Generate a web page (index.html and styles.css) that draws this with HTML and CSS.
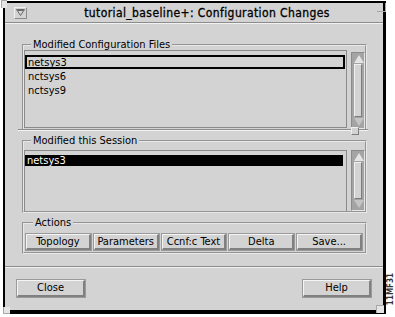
FILE: index.html
```html
<!DOCTYPE html>
<html lang="en">
  <head>
    <meta charset="UTF-8">
    <title>Configuration Changes</title>
    <link rel="stylesheet" href="styles.css">
  </head>
  <body>
    <div class="screen">
      <div class="window">
        <span class="handle handle-tl"></span>
        <span class="handle handle-tr"></span>
        <span class="handle handle-bl"></span>
        <span class="handle handle-br"></span>
        <div class="titlebar">
          <span class="menu-btn">
            <svg width="9" height="7" viewBox="0 0 9 7"><path d="M0.5 0.5 H8.5 L4.5 6.5 Z M1.5 1.5 H7.5" fill="none" stroke="#6a6a6a" stroke-width="1"/></svg>
          </span>
          <span class="title">tutorial_baseline+: Configuration Changes</span>
        </div>
        <div class="content">
          <fieldset class="group files">
            <legend>Modified Configuration Files</legend>
            <div class="listarea">
              <ul class="list list-files">
                <li class="item current">netsys3</li>
                <li class="item">nctsys6</li>
                <li class="item">nctsys9</li>
              </ul>
              <div class="scrollbar sb-files">
                <span class="arrow arrow-up"></span>
                <span class="thumb"></span>
                <span class="arrow arrow-down"></span>
              </div>
            </div>
          </fieldset>
          <div class="sash"><span class="sash-knob"></span></div>
          <fieldset class="group session">
            <legend>Modified this Session</legend>
            <div class="listarea">
              <ul class="list list-session">
                <li class="item selected">netsys3</li>
              </ul>
              <div class="scrollbar sb-session">
                <span class="arrow arrow-up"></span>
                <span class="thumb"></span>
                <span class="arrow arrow-down"></span>
              </div>
            </div>
          </fieldset>
          <fieldset class="group actions">
            <legend>Actions</legend>
            <div class="buttons">
              <button class="btn">Topology</button>
              <button class="btn">Parameters</button>
              <button class="btn">Ccnf:c Text</button>
              <button class="btn">Delta</button>
              <button class="btn">Save...</button>
            </div>
          </fieldset>
        </div>
        <div class="footer">
          <button class="btn btn-wide">Close</button>
          <button class="btn btn-wide">Help</button>
        </div>
      </div>
      <div class="figid">11MF31</div>
    </div>
  </body>
</html>
```

FILE: styles.css
```css
* { box-sizing: border-box; }
body {
  margin: 0;
  background: #fff;
  color: #000;
  font-family: "DejaVu Sans", sans-serif;
  font-stretch: condensed;
  font-size: 11px;
}
.screen {
  position: relative;
  width: 395px;
  height: 317px;
}
.window {
  position: relative;
  display: flex;
  flex-direction: column;
  margin: 1px 0 0 3px;
  width: 383px;
  height: 313px;
  border-style: solid;
  border-color: #000;
  border-width: 2px 3px 4px 2px;
  background: #d3d3d3;
}

/* resize corners of the window frame */
.handle {
  position: absolute;
  width: 10px;
  height: 10px;
  border-color: #a8a8a8;
  border-style: solid;
}
.handle-tl { top: -3px; left: -4px; border-width: 1px 0 0 1px; background: #e4e4e4; width: 6px; height: 8px; }
.handle-tr { top: 0; right: -3px; border-width: 0 1px 1px 0; width: 9px; height: 9px; }
.handle-bl { bottom: -4px; left: -2px; border-width: 0 0 1px 1px; width: 7px; height: 7px; background: #e4e4e4; }
.handle-br { bottom: -3px; right: -1px; border-width: 1px 0 0 1px; width: 8px; height: 8px; background: #e4e4e4; }

.titlebar {
  display: flex;
  align-items: center;
  height: 20px;
  border-bottom: 1px solid #8c8c8c;
  box-shadow: 0 1px 0 #f2f2f2;
}
.menu-btn {
  display: flex;
  align-items: center;
  justify-content: center;
  margin-left: 9px;
  width: 13px;
  height: 12px;
  border-style: solid;
  border-width: 1px;
  border-color: #f0f0f0 #8c8c8c #8c8c8c #f0f0f0;
}
.title {
  flex: 1;
  text-align: center;
  font-size: 12px;
  letter-spacing: 0.4px;
  -webkit-text-stroke: 0.3px #000;
  padding-left: 4px;
}

.content {
  display: flex;
  flex-direction: column;
  padding: 0 16px 0 17px;
}
.group {
  margin: 0;
  padding: 0;
  border: 2px groove #e8e8e8;
}
.group legend {
  margin-left: 7px;
  padding: 0 2px;
  line-height: 10px;
  height: 10px;
}
.files {
  margin-top: 17px;
  border-bottom: 0;
}
.session {
  margin-top: 5px;
  padding-top: 4px;
}
.actions {
  margin-top: 5px;
  padding: 6px 3px 2px 2px;
}

.listarea {
  display: flex;
  align-items: flex-start;
}
.list {
  list-style: none;
  margin: 0;
  padding: 4px 1px 0 0;
  width: 323px;
  border: 1px solid #8a8a8a;
}
.list-files { height: 78px; }
.list-session { height: 61px; border-bottom: 0; }
.item {
  height: 14px;
  line-height: 11px;
  padding-left: 1px;
  border: 2px solid transparent;
}
.current { border-color: #000; }
.selected {
  height: 11px;
  line-height: 11px;
  margin-right: 2px;
  border: 0;
  padding-left: 2px;
  background: #000;
  color: #fff;
}

.scrollbar {
  display: flex;
  flex-direction: column;
  margin-left: 4px;
  width: 14px;
  padding: 1px 2px;
  background: #a4a4a4;
  border-style: solid;
  border-width: 1px;
  border-color: #8a8a8a #e6e6e6 #e6e6e6 #8a8a8a;
}
.sb-files { margin-top: 2px; height: 77px; }
.sb-session { height: 61px; }
.arrow {
  height: 10px;
  position: relative;
}
.arrow::after {
  content: '';
  position: absolute;
  left: 0;
  border-left: 5px solid transparent;
  border-right: 5px solid transparent;
}
.arrow-up::after { top: 1px; border-bottom: 8px solid #e4e4e4; }
.arrow-down::after { top: 1px; border-top: 8px solid #c4c4c4; }
.thumb {
  flex: 1;
  background: #d3d3d3;
  border-style: solid;
  border-width: 1px;
  border-color: #efefef #7c7c7c #7c7c7c #efefef;
}

.sash {
  position: relative;
  margin: 0 -1px 0 -4px;
  height: 2px;
  border-top: 1px solid #8c8c8c;
  border-bottom: 1px solid #f2f2f2;
}
.sash-knob {
  position: absolute;
  top: -3px;
  right: 9px;
  width: 8px;
  height: 8px;
  background: #d3d3d3;
  border-style: solid;
  border-width: 1px;
  border-color: #efefef #7c7c7c #7c7c7c #efefef;
}

.buttons {
  display: flex;
  gap: 3px;
}
.btn {
  flex: 1;
  height: 16px;
  padding: 0;
  font: inherit;
  line-height: 12px;
  color: #000;
  background: #d3d3d3;
  border-style: solid;
  border-width: 1px 2px 2px 1px;
  border-color: #f4f4f4 #808080 #808080 #f4f4f4;
  box-shadow: 0 0 0 1px #9a9a9a;
}

.footer {
  flex: 1;
  display: flex;
  justify-content: space-between;
  align-items: flex-start;
  margin-top: 12px;
  padding: 13px 12px 0 12px;
  border-top: 1px solid #8c8c8c;
  box-shadow: inset 0 1px 0 #f2f2f2;
}
.btn-wide {
  flex: none;
  width: 68px;
  height: 17px;
}

.figid {
  position: absolute;
  right: 0;
  top: 272px;
  writing-mode: vertical-rl;
  transform: rotate(180deg);
  font-family: "DejaVu Sans", sans-serif;
  font-size: 8px;
  font-weight: bold;
  color: #333;
}
```
